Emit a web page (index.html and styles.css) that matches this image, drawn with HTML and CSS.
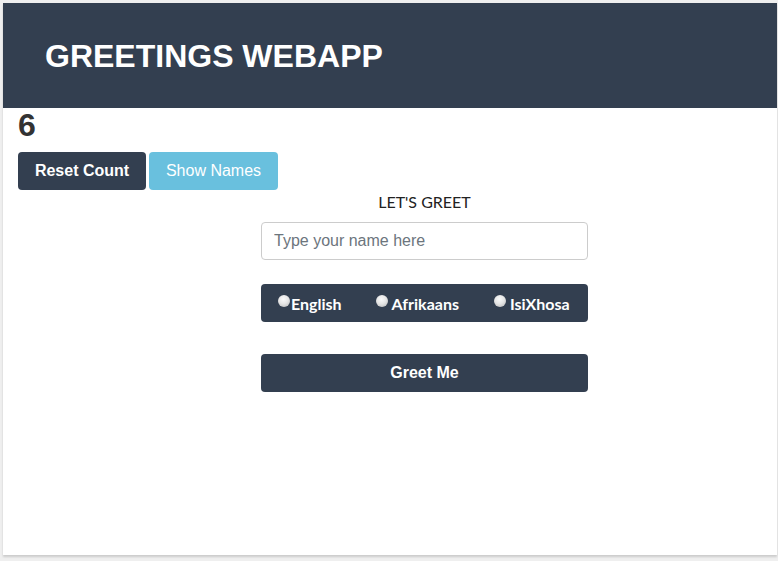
FILE: index.html
```html
<!DOCTYPE html>
<html>
<head>
<meta charset="utf-8">
<link rel="stylesheet" href="styles.css">
</head>
<body>
<div class="card">
  <header class="topbar"><h1>GREETINGS WEBAPP</h1></header>
  <div class="counter">6</div>
  <div class="actions">
    <button class="btn btn-dark">Reset Count</button>
    <button class="btn btn-info">Show Names</button>
  </div>
  <div class="form">
    <div class="title">LET'S GREET</div>
    <input class="name" type="text" placeholder="Type your name here">
    <div class="langs">
      <label class="lang lang-en"><input type="radio" name="lang">English</label>
      <label class="lang lang-af"><input type="radio" name="lang">Afrikaans</label>
      <label class="lang lang-xh"><input type="radio" name="lang">IsiXhosa</label>
    </div>
    <button class="btn btn-dark greet">Greet Me</button>
  </div>
</div>
</body>
</html>
```

FILE: styles.css
```css
html, body { margin: 0; padding: 0; }
body {
  background: #efefef;
  font-family: "Liberation Sans", Arial, sans-serif;
  color: #333;
  height: 561px;
  overflow: hidden;
}
.card {
  margin: 3px 1px 0 3px;
  height: 552px;
  background: #fff;
  box-shadow: 0 2px 2px rgba(0,0,0,0.15);
}
.topbar {
  background: #333f50;
  height: 105px;
  display: flex;
  align-items: center;
  padding-left: 42px;
}
.topbar h1 {
  margin: 0;
  color: #fff;
  font-size: 32px;
  font-weight: bold;
  position: relative;
  top: 1px;
}
.counter {
  font-size: 32px;
  font-weight: bold;
  color: #333;
  margin-left: 15px;
  line-height: 36px;
  height: 36px;
  margin-top: -1px;
}
.actions {
  display: flex;
  gap: 3px;
  margin-left: 15px;
  margin-top: 9px;
}
.btn {
  border: none;
  border-radius: 4px;
  height: 38px;
  font-family: "Liberation Sans", Arial, sans-serif;
  font-size: 16px;
  color: #fff;
  padding: 0;
  white-space: nowrap;
  cursor: pointer;
}
.btn-dark { background: #333f50; font-weight: bold; }
.btn-info { background: #69c0de; }
.actions .btn-dark { width: 128px; }
.actions .btn-info { width: 129px; }
.form {
  margin-left: 258px;
  width: 327px;
  display: flex;
  flex-direction: column;
}
.title {
  font-family: Lato, sans-serif;
  font-size: 16px;
  color: #222;
  text-align: center;
  margin-top: 2px;
  line-height: 20px;
}
.name {
  margin-top: 10px;
  height: 38px;
  box-sizing: border-box;
  border: 1px solid #ccc;
  border-radius: 4px;
  padding: 0 12px;
  font-family: "Liberation Sans", Arial, sans-serif;
  font-size: 16px;
}
.name::placeholder { color: #6c757d; }
.langs {
  margin-top: 24px;
  height: 38px;
  background: #333f50;
  border-radius: 4px;
  display: flex;
  align-items: center;
  font-family: Lato, sans-serif;
  font-weight: bold;
  font-size: 16px;
  color: #fff;
}
.lang { display: flex; align-items: center; }
.lang input {
  appearance: none;
  -webkit-appearance: none;
  width: 12px;
  height: 12px;
  border-radius: 50%;
  margin: 0 1px 0 0;
  background: radial-gradient(circle at 45% 35%, #fafafa 0%, #e6e6e6 45%, #b5b5b5 100%);
  position: relative;
  top: -2px;
}
.lang-en { margin-left: 17px; }
.lang-af { margin-left: 34px; }
.lang-af input, .lang-xh input { margin-right: 4px; }
.lang-xh { margin-left: 35px; }
.greet { margin-top: 32px; width: 100%; }
```
